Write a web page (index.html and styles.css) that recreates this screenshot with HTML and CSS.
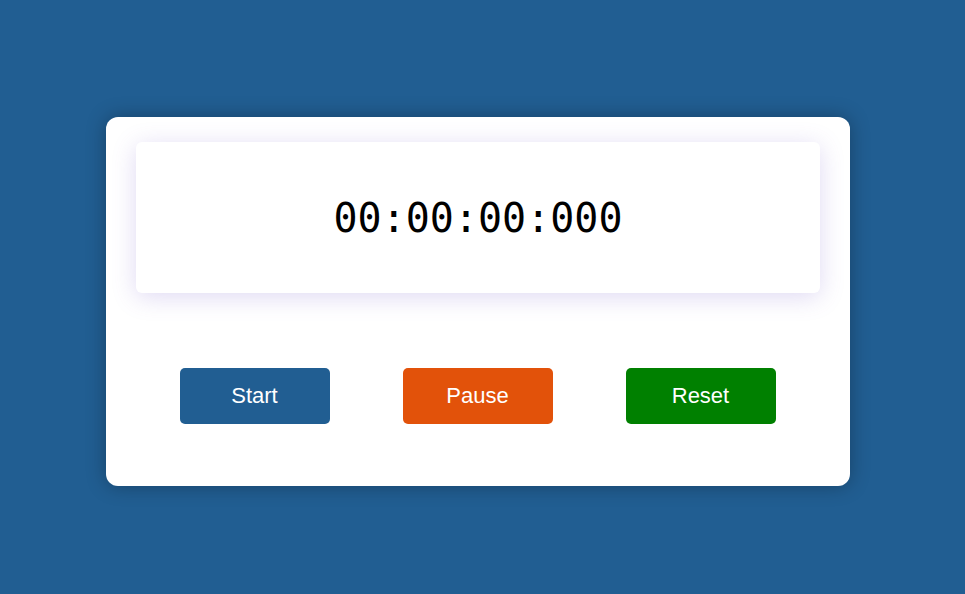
FILE: index.html
```html
<!DOCTYPE html>
<html>
<head>
<meta charset="utf-8">
<link rel="stylesheet" href="styles.css">
</head>
<body>
<div class="page">
  <div class="card">
    <div class="display">00:00:00:000</div>
    <div class="buttons">
      <button class="btn start">Start</button>
      <button class="btn pause">Pause</button>
      <button class="btn reset">Reset</button>
    </div>
  </div>
</div>
</body>
</html>
```
FILE: styles.css
```css
html, body {
  margin: 0;
  padding: 0;
}
body {
  background: #215e92;
  font-family: "Liberation Sans", Arial, sans-serif;
}
.page {
  height: 594px;
  display: flex;
  justify-content: center;
  padding-top: 117px;
  box-sizing: border-box;
}
.card {
  width: 744px;
  height: 369px;
  box-sizing: border-box;
  background: #fff;
  border-radius: 12px;
  padding: 25px 30px 0 30px;
  box-shadow: 0 0 20px rgba(0, 0, 0, 0.3);
  margin-left: -10px;
}
.display {
  height: 151px;
  border-radius: 6px;
  background: #fff;
  box-shadow: 0 4px 24px rgba(110, 80, 200, 0.22);
  display: flex;
  align-items: center;
  justify-content: center;
  font-family: "DejaVu Sans Mono", monospace;
  font-size: 40px;
  letter-spacing: 0;
  padding-left: 1px;
  color: #000;
}
.buttons {
  display: flex;
  gap: 73px;
  padding: 0 44px;
  margin-top: 75px;
}
.btn {
  width: 150px;
  height: 56px;
  border: none;
  border-radius: 5px;
  color: #fff;
  font-family: "Liberation Sans", Arial, sans-serif;
  font-size: 22px;
  padding: 0;
}
.start { background: #215e92; }
.pause { background: #e2520a; }
.reset { background: #008000; }
```
